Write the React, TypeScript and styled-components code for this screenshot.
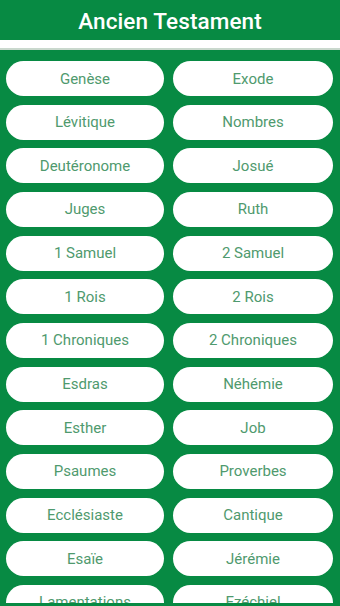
import React from "react";
import styled, { createGlobalStyle } from "styled-components";

const GREEN = "#078a43";

const Global = createGlobalStyle`
  html, body { margin: 0; padding: 0; background: ${GREEN}; }
  body { width: 340px; height: 606px; overflow: hidden; font-family: Roboto, "Noto Sans", sans-serif; }
`;

const Page = styled.div`
  width: 340px;
  height: 606px;
  background: ${GREEN};
  display: flex;
  flex-direction: column;
  overflow: hidden;
  padding-bottom: 3px;
  box-sizing: border-box;
`;

const Header = styled.header`
  flex-shrink: 0;
  height: 40px;
  padding-top: 2px;
  box-sizing: border-box;
  display: flex;
  align-items: center;
  justify-content: center;
  color: #ffffff;
  font-size: 22.5px;
  font-weight: 500;
  letter-spacing: 0.1px;
`;

const Divider = styled.div`
  flex-shrink: 0;
  height: 8px;
  background: #ffffff;
  border-bottom: 2px solid #c9d8cd;
`;

const Scroller = styled.div`
  flex: 1;
  min-height: 0;
  overflow: hidden;
`;

const Grid = styled.div`
  display: grid;
  grid-template-columns: 158px 160px;
  column-gap: 9px;
  row-gap: 8.67px;
  padding: 11px 7px 0 6px;
`;

const BookButton = styled.button`
  height: 35px;
  border: none;
  border-radius: 18px;
  background: #ffffff;
  color: #4f9a6e;
  font-family: Roboto, "Noto Sans", sans-serif;
  font-size: 15px;
  font-weight: 400;
  display: flex;
  align-items: center;
  justify-content: center;
  padding: 0;
  cursor: pointer;
`;

const books = [
  "Genèse", "Exode",
  "Lévitique", "Nombres",
  "Deutéronome", "Josué",
  "Juges", "Ruth",
  "1 Samuel", "2 Samuel",
  "1 Rois", "2 Rois",
  "1 Chroniques", "2 Chroniques",
  "Esdras", "Néhémie",
  "Esther", "Job",
  "Psaumes", "Proverbes",
  "Ecclésiaste", "Cantique",
  "Esaïe", "Jérémie",
  "Lamentations", "Ezéchiel",
];

export default function App() {
  return (
    <Page>
      <Global />
      <Header>Ancien Testament</Header>
      <Divider />
      <Scroller>
        <Grid>
          {books.map((b) => (
            <BookButton key={b}>{b}</BookButton>
          ))}
        </Grid>
      </Scroller>
    </Page>
  );
}
